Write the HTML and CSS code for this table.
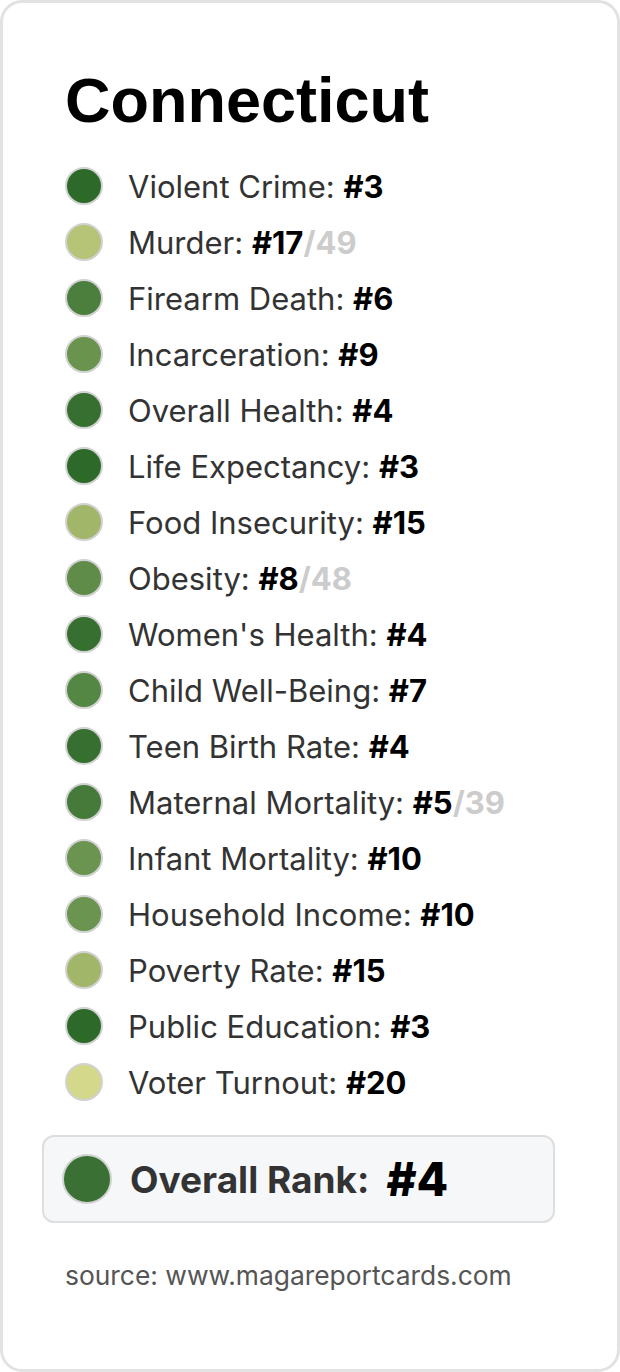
FILE: index.html
```html
<!DOCTYPE html>
<html lang="en">
<head>
<meta charset="utf-8">
<title>Connecticut</title>
<link rel="stylesheet" href="styles.css">
</head>
<body>
<div class="card">
  <h1 class="title">Connecticut</h1>
  <ul class="list">
    <li class="row"><span class="dot" style="background:#2d6a2a"></span><span class="label">Violent Crime: <b class="rank">#3</b></span></li>
    <li class="row"><span class="dot" style="background:#b5c477"></span><span class="label">Murder: <b class="rank">#17</b><b class="of">/49</b></span></li>
    <li class="row"><span class="dot" style="background:#4c7f3e"></span><span class="label">Firearm Death: <b class="rank">#6</b></span></li>
    <li class="row"><span class="dot" style="background:#6a944e"></span><span class="label">Incarceration: <b class="rank">#9</b></span></li>
    <li class="row"><span class="dot" style="background:#376f30"></span><span class="label">Overall Health: <b class="rank">#4</b></span></li>
    <li class="row"><span class="dot" style="background:#2d6a2a"></span><span class="label">Life Expectancy: <b class="rank">#3</b></span></li>
    <li class="row"><span class="dot" style="background:#a2b66a"></span><span class="label">Food Insecurity: <b class="rank">#15</b></span></li>
    <li class="row"><span class="dot" style="background:#5f8c48"></span><span class="label">Obesity: <b class="rank">#8</b><b class="of">/48</b></span></li>
    <li class="row"><span class="dot" style="background:#376f30"></span><span class="label">Women's Health: <b class="rank">#4</b></span></li>
    <li class="row"><span class="dot" style="background:#548644"></span><span class="label">Child Well-Being: <b class="rank">#7</b></span></li>
    <li class="row"><span class="dot" style="background:#376f30"></span><span class="label">Teen Birth Rate: <b class="rank">#4</b></span></li>
    <li class="row"><span class="dot" style="background:#457a3a"></span><span class="label">Maternal Mortality: <b class="rank">#5</b><b class="of">/39</b></span></li>
    <li class="row"><span class="dot" style="background:#6a9450"></span><span class="label">Infant Mortality: <b class="rank">#10</b></span></li>
    <li class="row"><span class="dot" style="background:#6a9450"></span><span class="label">Household Income: <b class="rank">#10</b></span></li>
    <li class="row"><span class="dot" style="background:#a2b66a"></span><span class="label">Poverty Rate: <b class="rank">#15</b></span></li>
    <li class="row"><span class="dot" style="background:#2d6a2a"></span><span class="label">Public Education: <b class="rank">#3</b></span></li>
    <li class="row"><span class="dot" style="background:#d3d88a"></span><span class="label">Voter Turnout: <b class="rank">#20</b></span></li>
  </ul>
  <div class="overall">
    <span class="dot dot-lg" style="background:#3a7033"></span>
    <span class="overall-label">Overall Rank:</span>
    <span class="overall-rank">#4</span>
  </div>
  <p class="source">source: www.magareportcards.com</p>
</div>
</body>
</html>
```

FILE: styles.css
```css
* { box-sizing: border-box; }
html, body { margin: 0; padding: 0; background: #ffffff; }
body { font-family: "Inter", "Liberation Sans", Arial, sans-serif; }

.card {
  height: 100vh;
  border: 3px solid #e2e2e2;
  border-radius: 22px;
  background: #ffffff;
  padding: 66px 62px 0 39px;
}

.title {
  margin: 0 0 26px 23px;
  font-family: "Liberation Sans", Arial, sans-serif;
  font-weight: 700;
  font-size: 63px;
  line-height: 63px;
  color: #000;
}

.list {
  list-style: none;
  margin: 0 0 25px 23px;
  padding: 0;
}

.row {
  height: 56px;
  display: flex;
  align-items: center;
  gap: 25px;
}

.dot {
  flex: none;
  width: 38px;
  height: 38px;
  border-radius: 50%;
  border: 2px solid #d2d2d2;
}

.label {
  font-size: 31px;
  color: #333333;
  white-space: nowrap;
}

.rank { font-weight: 700; color: #000; }
.of { font-weight: 700; color: #cccccc; }

.overall {
  width: 513px;
  height: 88px;
  display: flex;
  align-items: center;
  padding: 0 18px;
  background: #f6f7f9;
  border: 2px solid #dedede;
  border-radius: 12px;
}

.dot-lg {
  width: 50px;
  height: 50px;
  margin-right: 18px;
}

.overall-label {
  font-weight: 700;
  font-size: 37px;
  color: #333333;
  margin-right: 17px;
}

.overall-rank {
  font-weight: 800;
  font-size: 46px;
  color: #000;
}

.source {
  margin: 36px 0 0 23px;
  font-size: 26.4px;
  color: #555555;
}
```
